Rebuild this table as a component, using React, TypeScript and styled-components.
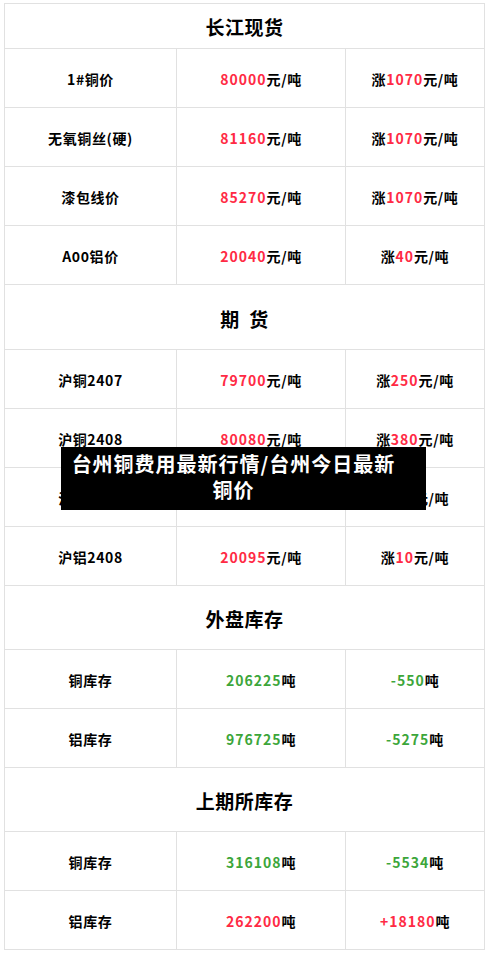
import React from 'react';
import styled, { createGlobalStyle } from 'styled-components';

const RED = '#ff2a44';
const GREEN = '#3ca63a';

const GlobalStyle = createGlobalStyle`
  html, body {
    margin: 0;
    padding: 0;
    background: #ffffff;
  }
  body {
    font-family: 'Noto Sans CJK SC', 'Noto Sans', sans-serif;
    color: #000000;
  }
`;

const Page = styled.div`
  position: relative;
  width: 488px;
  padding: 3px 4px 8px;
  box-sizing: border-box;
`;

const Table = styled.table`
  width: 480px;
  border-collapse: collapse;
  table-layout: fixed;
  border: 1px solid #e1e1e1;
`;

const Row = styled.tr<{ $h: number }>`
  height: ${(p) => p.$h}px;
`;

const HeadCell = styled.td<{ $tall: boolean }>`
  padding: ${(p) => (p.$tall ? 2 : 0)}px 0 0;
  border: 1px solid #e1e1e1;
  text-align: center;
  font-size: 19px;
  font-weight: bold;
  letter-spacing: 0.5px;
  white-space: pre;
`;

const Cell = styled.td`
  padding: 1px 0 0;
  border: 1px solid #e1e1e1;
  text-align: center;
  font-size: 14px;
  font-weight: bold;
  letter-spacing: 0.6px;
`;

const Num = styled.span<{ $c: string }>`
  color: ${(p) => p.$c};
  letter-spacing: 1px;
`;

const Caption = styled.div`
  position: absolute;
  left: 61px;
  top: 447px;
  width: 365px;
  height: 63px;
  box-sizing: border-box;
  padding: 4px 30px 0 10px;
  background: #000000;
  color: #ffffff;
  font-size: 20px;
  font-weight: bold;
  line-height: 26px;
  letter-spacing: 1px;
  text-align: center;
`;

type RowData = [string, React.ReactNode, React.ReactNode];

const price = (n: string) => (
  <>
    <Num $c={RED}>{n}</Num>元/吨
  </>
);
const rise = (n: string) => (
  <>
    涨<Num $c={RED}>{n}</Num>元/吨
  </>
);
const ton = (n: string, c: string) => (
  <>
    <Num $c={c}>{n}</Num>吨
  </>
);

const sections: { title: string; h: number; rows: RowData[] }[] = [
  {
    title: '长江现货',
    h: 45,
    rows: [
      ['1#铜价', price('80000'), rise('1070')],
      ['无氧铜丝(硬)', price('81160'), rise('1070')],
      ['漆包线价', price('85270'), rise('1070')],
      ['A00铝价', price('20040'), rise('40')],
    ],
  },
  {
    title: '期  货',
    h: 65,
    rows: [
      ['沪铜2407', price('79700'), rise('250')],
      ['沪铜2408', price('80080'), rise('380')],
      ['沪铝2407', price('20110'), rise('15')],
      ['沪铝2408', price('20095'), rise('10')],
    ],
  },
  {
    title: '外盘库存',
    h: 64,
    rows: [
      ['铜库存', ton('206225', GREEN), ton('-550', GREEN)],
      ['铝库存', ton('976725', GREEN), ton('-5275', GREEN)],
    ],
  },
  {
    title: '上期所库存',
    h: 64,
    rows: [
      ['铜库存', ton('316108', GREEN), ton('-5534', GREEN)],
      ['铝库存', ton('262200', RED), ton('+18180', RED)],
    ],
  },
];

const App: React.FC = () => {
  return (
    <Page>
      <GlobalStyle />
      <Table>
        <colgroup>
          <col style={{ width: 172 }} />
          <col style={{ width: 169 }} />
          <col style={{ width: 139 }} />
        </colgroup>
        <tbody>
          {sections.map((s) => (
            <React.Fragment key={s.title}>
              <Row $h={s.h}>
                <HeadCell colSpan={3} $tall={s.h > 50}>
                  {s.title}
                </HeadCell>
              </Row>
              {s.rows.map((r, i) => (
                <Row key={i} $h={59}>
                  <Cell>{r[0]}</Cell>
                  <Cell>{r[1]}</Cell>
                  <Cell>{r[2]}</Cell>
                </Row>
              ))}
            </React.Fragment>
          ))}
        </tbody>
      </Table>
      <Caption>台州铜费用最新行情/台州今日最新铜价</Caption>
    </Page>
  );
};

export default App;
